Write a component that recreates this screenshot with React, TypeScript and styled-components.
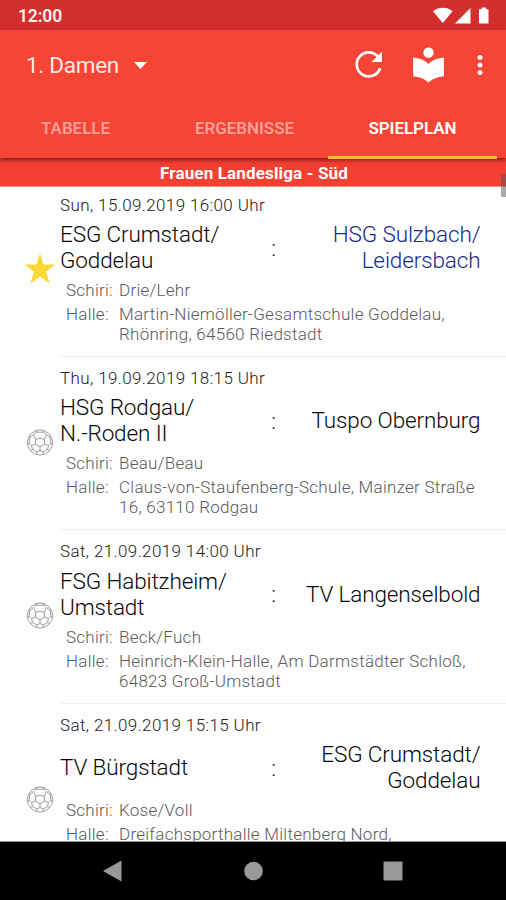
import React from "react";
import styled, { createGlobalStyle } from "styled-components";

const GlobalStyle = createGlobalStyle`
  *, *::before, *::after { box-sizing: border-box; }
  body { margin: 0; background: #fff; }
`;

const Screen = styled.div`
  width: 506px;
  height: 900px;
  display: flex;
  flex-direction: column;
  overflow: hidden;
  background: #fefefe;
  font-family: Roboto, "Noto Sans", sans-serif;
`;

const StatusBar = styled.div`
  flex: none;
  height: 30px;
  display: flex;
  align-items: center;
  justify-content: space-between;
  padding: 2px 15px 0 18px;
  background: #d32f2f;
  color: #ffeeee;
  font-size: 17.5px;
  font-weight: 600;
  letter-spacing: -0.15px;
`;

const StatusIcons = styled.svg`
  display: block;
  width: 58px;
  height: 18px;
  fill: #fff;
`;

const Header = styled.header`
  flex: none;
  height: 128px;
  background: #f64435;
  position: relative;
  z-index: 2;
  box-shadow: 0 2px 4px rgba(60, 0, 0, 0.65);
`;

const Toolbar = styled.div`
  height: 70px;
  display: flex;
  align-items: center;
  padding: 0 11px 0 26px;
  color: #fff;
`;

const TeamSelect = styled.button`
  display: flex;
  align-items: center;
  gap: 15px;
  margin-right: auto;
  padding: 0;
  border: 0;
  background: none;
  color: #ffe9e6;
  font: 400 22.5px/28px Roboto, sans-serif;
  letter-spacing: -0.28px;
`;

const Caret = styled.svg`
  width: 13px;
  height: 7px;
  fill: #fff;
`;

const ActionIcon = styled.svg<{ $size: number; $gap: number }>`
  display: block;
  width: ${(p) => p.$size}px;
  height: ${(p) => p.$size}px;
  margin-right: ${(p) => p.$gap}px;
  fill: #fff;
`;

const Tabs = styled.nav`
  height: 59px;
  display: grid;
  grid-template-columns: 151px 187px 170px;
`;

const Tab = styled.div<{ $active?: boolean }>`
  display: flex;
  align-items: center;
  justify-content: center;
  padding-bottom: ${(p) => (p.$active ? 0 : 3)}px;
  margin-left: ${(p) => (p.$active ? -10 : 0)}px;
  margin-right: ${(p) => (p.$active ? 11 : 0)}px;
  border-bottom: ${(p) => (p.$active ? "3px solid #fbc02d" : "0")};
  color: ${(p) => (p.$active ? "#fff" : "#fb9f97")};
  font-size: 17px;
  font-weight: 600;
  letter-spacing: -0.05px;
`;

const League = styled.h1`
  flex: none;
  height: 29px;
  margin: 0;
  position: relative;
  z-index: 1;
  background: #f43f33;
  border-bottom: 1px solid #fa8d85;
  color: #fff;
  text-align: center;
  font-size: 17px;
  line-height: 30px;
  font-weight: 700;
  letter-spacing: 0.15px;
  padding-left: 2px;
`;

const MatchList = styled.main`
  flex: 1;
  min-height: 0;
  overflow: hidden;
  position: relative;
  border-bottom: 1px solid #999;
`;

const Matches = styled.div`
  margin-top: -3.5px;
`;

const ScrollThumb = styled.div`
  position: absolute;
  z-index: 3;
  right: 0;
  top: 174px;
  width: 5px;
  height: 23px;
  background: rgba(85, 85, 85, 0.5);
`;

const Match = styled.article`
  height: 173.4px;
  display: grid;
  grid-template-columns: 60px 1fr;
`;

const Marker = styled.svg<{ $top: number }>`
  display: block;
  width: 32px;
  height: 32px;
  margin: ${(p) => p.$top}px 0 0 24px;
`;

const Details = styled.div`
  border-bottom: 1px solid #f0f0f0;
  padding-top: 11px;
`;

const DateLine = styled.div`
  height: 20px;
  color: #222;
  font-size: 17px;
  line-height: 20px;
  font-weight: 300;
  letter-spacing: 0.38px;
  white-space: nowrap;
`;

const Pairing = styled.div`
  height: 52px;
  margin-top: 6.5px;
  display: grid;
  grid-template-columns: 200px 26px 194.5px;
  align-items: center;
  color: #080808;
  font-size: 22.5px;
  line-height: 26px;
  font-weight: 300;
  white-space: pre-line;
`;

const Team = styled.div<{ $guest?: boolean; $own?: boolean }>`
  text-align: ${(p) => (p.$guest ? "right" : "left")};
  color: ${(p) => (p.$own ? "#152a88" : "inherit")};
  letter-spacing: -0.12px;
`;

const Versus = styled.div`
  padding-left: 1px;
  padding-top: 1px;
  text-align: center;
  font-weight: 350;
`;

const Info = styled.dl`
  margin: 7px 0 0 6px;
  display: grid;
  grid-template-columns: 53px 1fr;
  row-gap: 3.5px;
  color: #5a5a5a;
  font-size: 17px;
  line-height: 20.3px;
  font-weight: 300;
  letter-spacing: 0.26px;
`;

const Term = styled.dt`
  margin: 0;
`;

const Value = styled.dd`
  margin: 0;
  white-space: pre;
`;

const NavBar = styled.footer`
  flex: none;
  height: 58px;
  background: #000;
  display: flex;
  align-items: center;
  justify-content: space-between;
  padding: 0 102px;
`;

const NavIcon = styled.svg`
  display: block;
  width: 22px;
  height: 22px;
  fill: #999;
`;

interface MarkerProps {
  top: number;
}

const Star = ({ top }: MarkerProps) => (
  <Marker $top={top} viewBox="0 0 32 32">
    <path
      d="M16 0.5 L19.7 11.5 H31.5 L22 18.8 L25.8 30.5 L16 23.4 L6.2 30.5 L10 18.8 L0.5 11.5 H12.3 Z"
      fill="#fdd835"
    />
  </Marker>
);

const Ball = ({ top }: MarkerProps) => (
  <Marker $top={top} viewBox="0 0 32 32" fill="none" stroke="#8c8c8c" strokeWidth="0.85">
    <circle cx="16" cy="16.5" r="12.6" />
    <path d="M11.7 13.2 L16 12.4 L20.3 13.2 L20.5 18 L16 20.8 L11.5 18 Z" />
    <path d="M11.7 13.2 L9.5 8.5 M20.3 13.2 L22.5 8.5 M20.5 18 L24.5 19.5 M16 20.8 V24.5 M11.5 18 L7.5 19.5" />
    <path d="M9.5 8.5 L12 6.2 H20 L22.5 8.5 M9.5 8.5 L6 11.2 L5 17.2 L7.5 19.5 L8.5 23.5 L12.8 26 L16 24.5 L19.2 26 L23.5 23.5 L24.5 19.5 L27 17.2 L26 11.2 L22.5 8.5" />
    <path d="M12 6.2 L12.8 4.5 M20 6.2 L19.2 4.5 M6 11.2 L5 10.7 M26 11.2 L27 10.7 M5 17.2 L3.6 17.8 M27 17.2 L28.4 17.8 M8.5 23.5 L6.8 24.5 M23.5 23.5 L25.2 24.5 M12.8 26 L12.5 28.3 M19.2 26 L19.5 28.3" />
  </Marker>
);

interface MatchData {
  date: string;
  home: string;
  guest: string;
  referees: string;
  hall: string;
  favourite?: boolean;
  markerTop?: number;
}

const matches: MatchData[] = [
  {
    date: "Sun, 15.09.2019 16:00 Uhr",
    home: "ESG Crumstadt/\nGoddelau",
    guest: "HSG Sulzbach/\nLeidersbach",
    referees: "Drie/Lehr",
    hall: "Martin-Niemöller-Gesamtschule Goddelau,\nRhönring, 64560 Riedstadt",
    favourite: true,
  },
  {
    date: "Thu, 19.09.2019 18:15 Uhr",
    home: "HSG Rodgau/\nN.-Roden II",
    guest: "Tuspo Obernburg",
    referees: "Beau/Beau",
    hall: "Claus-von-Staufenberg-Schule, Mainzer Straße\n16, 63110 Rodgau",
  },
  {
    date: "Sat, 21.09.2019 14:00 Uhr",
    home: "FSG Habitzheim/\nUmstadt",
    guest: "TV Langenselbold",
    referees: "Beck/Fuch",
    hall: "Heinrich-Klein-Halle, Am Darmstädter Schloß,\n64823 Groß-Umstadt",
  },
  {
    date: "Sat, 21.09.2019 15:15 Uhr",
    home: "TV Bürgstadt",
    guest: "ESG Crumstadt/\nGoddelau",
    referees: "Kose/Voll",
    hall: "Dreifachsporthalle Miltenberg Nord,",
    markerTop: 79,
  },
];

export default function App() {
  return (
    <>
      <GlobalStyle />
      <Screen>
        <StatusBar>
          <span>12:00</span>
          <StatusIcons viewBox="0 0 58 18">
            <path d="M0 4.3 C5.5 -0.3 14 -0.3 19.5 4.3 L9.8 16 Z" />
            <path d="M22 16.5 L37.5 1 V16.5 Z" />
            <path d="M46 2.2 H48.5 V0.5 H53 V2.2 H55.5 V16.5 H46 Z" />
          </StatusIcons>
        </StatusBar>
        <Header>
          <Toolbar>
            <TeamSelect>
              1. Damen
              <Caret viewBox="0 0 13 7">
                <path d="M0 0 H13 L6.5 7 Z" />
              </Caret>
            </TeamSelect>
            <ActionIcon viewBox="0 0 40 40" $size={40} $gap={19}>
              <path
                d="M31.2 23 A12 12 0 1 1 28.9 11.6"
                fill="none"
                stroke="#fff"
                strokeWidth="2.7"
              />
              <path d="M33 6.5 V17 H22.5 Z" />
            </ActionIcon>
            <ActionIcon viewBox="0 0 24 24" $size={41} $gap={16}>
              <path d="M12 11.55C9.64 9.35 6.48 8 3 8v11c3.48 0 6.64 1.35 9 3.55 2.36-2.19 5.52-3.55 9-3.55V8c-3.48 0-6.64 1.35-9 3.55zM12 8c1.66 0 3-1.34 3-3s-1.34-3-3-3-3 1.34-3 3 1.34 3 3 3z" transform="translate(0 -0.5)" />
            </ActionIcon>
            <ActionIcon viewBox="0 0 24 24" $size={30} $gap={0}>
              <path d="M12 8c1.1 0 2-.9 2-2s-.9-2-2-2-2 .9-2 2 .9 2 2 2zm0 2c-1.1 0-2 .9-2 2s.9 2 2 2 2-.9 2-2-.9-2-2-2zm0 6c-1.1 0-2 .9-2 2s.9 2 2 2 2-.9 2-2-.9-2-2-2z" />
            </ActionIcon>
          </Toolbar>
          <Tabs>
            <Tab>TABELLE</Tab>
            <Tab>ERGEBNISSE</Tab>
            <Tab $active>SPIELPLAN</Tab>
          </Tabs>
        </Header>
        <League>Frauen Landesliga - Süd</League>
        <ScrollThumb />
        <MatchList>
          <Matches>
            {matches.map((m) => {
              const Icon = m.favourite ? Star : Ball;
              return (
                <Match key={m.date}>
                  <Icon top={m.markerTop ?? 69} />
                  <Details>
                    <DateLine>{m.date}</DateLine>
                    <Pairing>
                      <Team>{m.home}</Team>
                      <Versus>:</Versus>
                      <Team $guest $own={m.favourite}>
                        {m.guest}
                      </Team>
                    </Pairing>
                    <Info>
                      <Term>Schiri:</Term>
                      <Value>{m.referees}</Value>
                      <Term>Halle:</Term>
                      <Value>{m.hall}</Value>
                    </Info>
                  </Details>
                </Match>
              );
            })}
          </Matches>
        </MatchList>
        <NavBar>
          <NavIcon viewBox="0 0 22 22">
            <path d="M1 11 L19.5 0.5 V21.5 Z" />
          </NavIcon>
          <NavIcon viewBox="0 0 22 22">
            <circle cx="11.5" cy="11" r="9.3" />
          </NavIcon>
          <NavIcon viewBox="0 0 22 22">
            <rect x="1.5" y="1.5" width="19" height="19" rx="1" />
          </NavIcon>
        </NavBar>
      </Screen>
    </>
  );
}
